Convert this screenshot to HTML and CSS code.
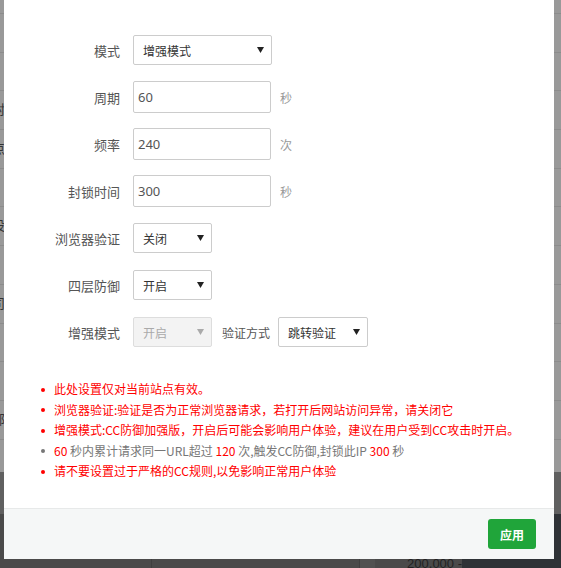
FILE: index.html
```html
<!DOCTYPE html>
<html lang="zh-CN">
<head>
<meta charset="utf-8">
<title>CC防御</title>
<link rel="stylesheet" href="styles.css">
</head>
<body>
<div class="page">
  <div class="bg-rows">
    <div class="bg-row"></div>
    <div class="bg-row"></div>
    <div class="bg-row"><span class="bg-txt">封</span></div>
    <div class="bg-row"><span class="bg-txt">点</span></div>
    <div class="bg-row"></div>
    <div class="bg-row"><span class="bg-txt">设</span></div>
    <div class="bg-row"></div>
    <div class="bg-row"><span class="bg-txt">司</span></div>
    <div class="bg-row"></div>
    <div class="bg-row"></div>
    <div class="bg-row"><span class="bg-txt">部</span></div>
    <div class="bg-row"></div>
  </div>
  <div class="bg-band"></div>
  <div class="bg-bottom">
    <div class="bg-left">
      <div class="bg-col c1"></div>
      <div class="bg-col c2"></div>
      <div class="bg-col c3"></div>
      <div class="bg-col c4"><span class="axis">200,000 -</span></div>
    </div>
    <div class="bg-right"></div>
  </div>
</div>

<div class="modal">
  <div class="form">
    <div class="row">
      <label class="lbl">模式</label>
      <div class="select wide"><span>增强模式</span><svg class="caret" width="7" height="6" viewBox="0 0 7 6"><path d="M0 0H7L3.5 6Z"/></svg></div>
    </div>
    <div class="row">
      <label class="lbl">周期</label>
      <div class="input">60</div>
      <span class="unit">秒</span>
    </div>
    <div class="row">
      <label class="lbl">频率</label>
      <div class="input">240</div>
      <span class="unit">次</span>
    </div>
    <div class="row">
      <label class="lbl">封锁时间</label>
      <div class="input">300</div>
      <span class="unit">秒</span>
    </div>
    <div class="row">
      <label class="lbl">浏览器验证</label>
      <div class="select small"><span>关闭</span><svg class="caret" width="7" height="6" viewBox="0 0 7 6"><path d="M0 0H7L3.5 6Z"/></svg></div>
    </div>
    <div class="row">
      <label class="lbl">四层防御</label>
      <div class="select small"><span>开启</span><svg class="caret" width="7" height="6" viewBox="0 0 7 6"><path d="M0 0H7L3.5 6Z"/></svg></div>
    </div>
    <div class="row">
      <label class="lbl">增强模式</label>
      <div class="select small disabled"><span>开启</span><svg class="caret" width="7" height="6" viewBox="0 0 7 6"><path d="M0 0H7L3.5 6Z"/></svg></div>
      <span class="sublbl">验证方式</span>
      <div class="select mid"><span>跳转验证</span><svg class="caret" width="7" height="6" viewBox="0 0 7 6"><path d="M0 0H7L3.5 6Z"/></svg></div>
    </div>
  </div>

  <ul class="notes">
    <li class="red">此处设置仅对当前站点有效。</li>
    <li class="red">浏览器验证:验证是否为正常浏览器请求，若打开后网站访问异常，请关闭它</li>
    <li class="red">增强模式:CC防御加强版，开启后可能会影响用户体验，建议在用户受到CC攻击时开启。</li>
    <li class="gray"><span class="num">60</span> 秒内累计请求同一URL超过 <span class="num">120</span> 次,触发CC防御,封锁此IP <span class="num">300</span> 秒</li>
    <li class="red">请不要设置过于严格的CC规则,以免影响正常用户体验</li>
  </ul>

  <div class="footer">
    <button class="btn">应用</button>
  </div>
</div>
</body>
</html>
```

FILE: styles.css
```css
* { box-sizing: border-box; }

html, body {
  margin: 0;
  padding: 0;
  width: 561px;
  height: 568px;
  overflow: hidden;
}

body {
  font-family: "Noto Sans CJK SC", "Noto Sans", "Liberation Sans", sans-serif;
  position: relative;
  background: #4a4a4a;
}

/* ---------- dimmed page behind the dialog ---------- */
.page {
  display: flex;
  flex-direction: column;
  height: 568px;
}

.bg-rows {
  height: 472px;
  background: #999999;
  padding-top: 13px;
  overflow: hidden;
}

.bg-row {
  height: 38.7px;
  border-top: 1px solid #8c8c8c;
  position: relative;
  font-size: 13px;
  color: #333;
}

.bg-txt {
  display: block;
  margin-left: -8px;
  padding-top: 10px;
  line-height: 16px;
}

.bg-band {
  height: 42px;
  background: #606060;
}

.bg-bottom {
  flex: 1;
  display: flex;
}

.bg-left {
  width: 462px;
  background: #4a4a4a;
  display: flex;
}

.bg-col {
  height: 100%;
}
.bg-col.c1 { width: 152px; border-right: 1px solid #3f3f3f; }
.bg-col.c2 { width: 209px; border-right: 1px solid #3f3f3f; }
.bg-col.c3 { width: 15px; background: #515151; }
.bg-col.c4 {
  flex: 1;
  display: flex;
  align-items: flex-end;
  padding-left: 32px;
}

.axis {
  font-family: "Liberation Sans", "Noto Sans", sans-serif;
  font-size: 13px;
  color: #222;
  line-height: 14px;
  margin-bottom: -3px;
  white-space: nowrap;
}

.bg-right {
  flex: 1;
  background: #2e3236;
}

/* ---------- dialog ---------- */
.modal {
  position: absolute;
  left: 4px;
  top: 0;
  width: 550px;
  height: 559px;
  background: #fff;
  display: flex;
  flex-direction: column;
}

.form {
  padding-top: 34px;
}

.row {
  display: flex;
  align-items: center;
  height: 32px;
  margin-bottom: 15px;
}

.row:last-child { margin-bottom: 0; }

.lbl {
  width: 116px;
  text-align: right;
  font-size: 13px;
  color: #555;
  margin-right: 13px;
  white-space: nowrap;
}

.input {
  width: 138px;
  height: 32px;
  border: 1px solid #ccc;
  border-radius: 2px;
  font-size: 13px;
  color: #555;
  line-height: 30px;
  padding-left: 4px;
  font-family: "Noto Sans", "Liberation Sans", sans-serif;
}

.unit {
  margin-left: 9px;
  font-size: 12px;
  color: #999;
}

.select {
  height: 30px;
  border: 1px solid #ccc;
  border-radius: 2px;
  display: flex;
  align-items: center;
  justify-content: space-between;
  padding: 0 7px 0 9px;
  font-size: 12px;
  color: #333;
}

.select.wide { width: 139px; }
.select.small { width: 79px; }
.select.mid { width: 90px; }

.caret { fill: #222; display: block; }

.select.disabled {
  background: #f3f3f3;
  border-color: #ddd;
  color: #aaa;
}
.select.disabled .caret { fill: #aaa; }

.sublbl {
  font-size: 12px;
  color: #555;
  margin-left: 10px;
  margin-right: 8px;
}

/* ---------- notes ---------- */
.notes {
  list-style: none;
  margin: 31px 0 0;
  padding: 0 0 0 50px;
  font-size: 12px;
  line-height: 20.5px;
}

.notes li {
  position: relative;
  white-space: nowrap;
}

.notes li::before {
  content: "";
  position: absolute;
  left: -13px;
  top: 8.5px;
  width: 4px;
  height: 4px;
  border-radius: 50%;
  background: currentColor;
}

.notes .red { color: #ff0000; }
.notes .gray { color: #777; }
.notes .num { color: #ff0000; }

/* ---------- footer ---------- */
.footer {
  margin-top: auto;
  height: 51px;
  border-top: 1px solid #e7e9e9;
  background: #f5f7f7;
  display: flex;
  justify-content: flex-end;
  align-items: flex-start;
  padding: 10px 18px 0 0;
}

.btn {
  width: 48px;
  height: 30px;
  border: none;
  border-radius: 3px;
  background: #20a53a;
  color: #fff;
  font-family: "Noto Sans CJK SC", sans-serif;
  font-size: 12px;
  font-weight: bold;
  padding: 0;
}
```
